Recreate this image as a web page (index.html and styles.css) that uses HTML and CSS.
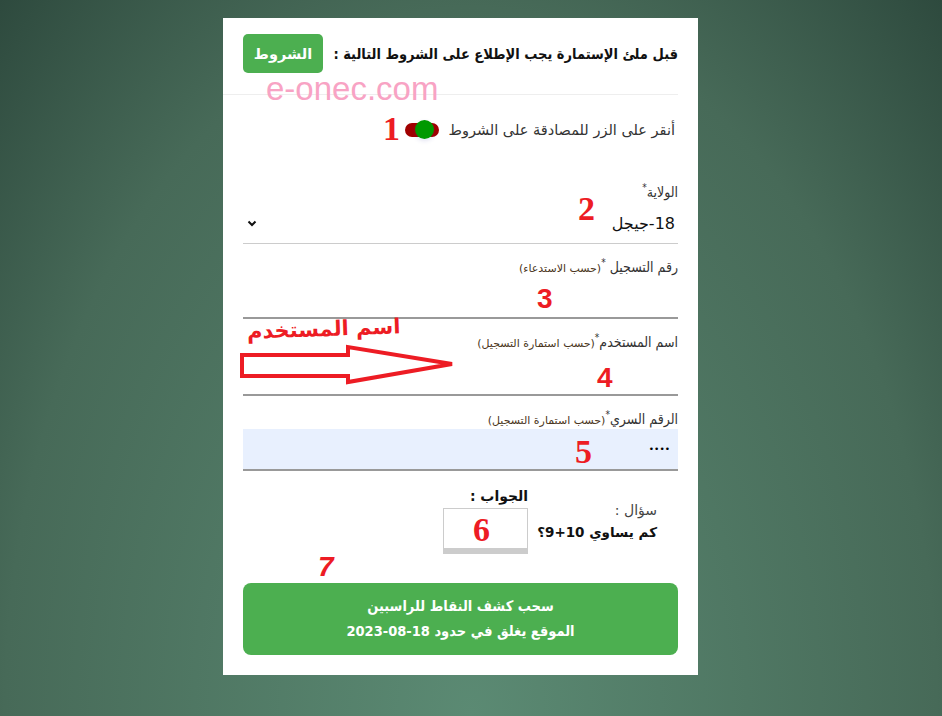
FILE: index.html
```html
<!DOCTYPE html>
<html lang="ar" dir="rtl">
<head>
    <meta charset="utf-8">
    <title>سحب كشف النقاط</title>
    <link rel="stylesheet" href="styles.css">
</head>
<body>
    <div class="card">
        <div class="terms-row">
            <span class="terms-text">قبل ملئ الإستمارة يجب الإطلاع على الشروط التالية :</span>
            <button class="btn-terms">الشروط</button>
        </div>
        <hr class="sep">

        <div class="agree-row">
            <span class="agree-text">أنقر على الزر للمصادقة على الشروط</span>
            <span class="switch"><span class="knob"></span></span>
        </div>

        <div class="field field-first">
            <label class="field-label">الولاية<sup>*</sup></label>
            <div class="select">
                <span>18-جيجل</span>
                <svg class="chevron" width="10" height="7" viewBox="0 0 10 7"><path d="M1.5 1.5 L5 5 L8.5 1.5" fill="none" stroke="#111" stroke-width="2"/></svg>
            </div>
        </div>

        <div class="field">
            <label class="field-label">رقم التسجيل <sup>*</sup><small>(حسب الاستدعاء)</small></label>
            <input class="text-input" type="text">
        </div>

        <div class="field">
            <label class="field-label">اسم المستخدم<sup>*</sup><small>(حسب استمارة التسجيل)</small></label>
            <input class="text-input tall" type="text">
        </div>

        <div class="field">
            <label class="field-label">الرقم السري<sup>*</sup><small>(حسب استمارة التسجيل)</small></label>
            <input class="text-input filled" type="password" value="1234">
        </div>

        <div class="captcha">
            <div class="question">
                <div class="q-title">سؤال :</div>
                <div class="q-text">كم يساوي 10+9؟</div>
            </div>
            <div class="answer">
                <div class="a-title">الجواب :</div>
                <input class="answer-box" type="text">
            </div>
        </div>

        <button class="btn-submit">سحب كشف النقاط للراسبين<br>الموقع يغلق في حدود 18-08-2023</button>

        <!-- annotations drawn over the screenshot -->
        <div class="watermark">e-onec.com</div>
        <span class="mark m1">1</span>
        <span class="mark m2">2</span>
        <span class="mark sans m3">3</span>
        <span class="mark sans m4">4</span>
        <span class="mark m5">5</span>
        <span class="mark m6">6</span>
        <span class="mark sans m7">7</span>
        <div class="hand-note">اسم المستخدم</div>
        <svg class="arrow" width="222" height="44" viewBox="0 0 222 44">
            <polygon points="2,12 108,12 108,4 212,21 108,39 108,33 2,33" fill="none" stroke="#ed1c24" stroke-width="4" stroke-linejoin="miter"/>
        </svg>
    </div>
</body>
</html>
```

FILE: styles.css
```css
body {
    margin: 0;
    min-height: 716px;
    background: radial-gradient(ellipse farthest-corner at 50% 100%, #5b8a73 0%, #476a58 70%, #2e4a3e 100%);
    font-family: "DejaVu Sans", "Liberation Sans", sans-serif;
    color: #222;
    overflow: hidden;
}

.card {
    position: relative;
    box-sizing: border-box;
    width: 475px;
    height: 657px;
    margin: 18px 244px 0 auto;
    padding: 16px 20px 0 20px;
    background-color: #fff;
}

.terms-row {
    display: flex;
    align-items: center;
    justify-content: space-between;
    height: 39px;
}

.terms-text {
    font-family: "DejaVu Sans Condensed", "DejaVu Sans", sans-serif;
    font-size: 14.5px;
    font-weight: bold;
    white-space: nowrap;
    color: #111;
}

.btn-terms {
    width: 80px;
    height: 39px;
    border: none;
    border-radius: 5px;
    background-color: #4caf50;
    color: #fff;
    font-family: inherit;
    font-size: 14.5px;
    font-weight: bold;
}

.sep {
    border: none;
    border-top: 1px solid #eee;
    margin: 21px 0 0 -20px;
}

.agree-row {
    display: flex;
    align-items: center;
    gap: 9px;
    height: 24px;
    margin-top: 23px;
    padding-right: 3px;
    font-size: 14.5px;
    color: #333;
}

.switch {
    position: relative;
    width: 34px;
    height: 14px;
    border-radius: 7px;
    background-color: #a00000;
}

.knob {
    position: absolute;
    top: -3px;
    right: 5px;
    width: 19px;
    height: 19px;
    border-radius: 50%;
    background-color: #009900;
    box-shadow: 0 2px 4px rgba(60, 60, 160, 0.15);
}

.field {
    margin-top: 13px;
}

.field-first {
    margin-top: 40px;
}

.field-label {
    display: block;
    height: 20px;
    line-height: 20px;
    font-family: "DejaVu Sans Condensed", "DejaVu Sans", sans-serif;
    font-size: 14px;
    color: #333;
}

.field-label sup {
    font-size: 10px;
    line-height: 0;
}

.field-label small {
    font-family: "DejaVu Sans", sans-serif;
    font-size: 11px;
    color: #4a3520;
}

.select {
    display: flex;
    align-items: center;
    justify-content: space-between;
    box-sizing: border-box;
    height: 42px;
    padding: 2px 3px 0 4px;
    border-bottom: 1px solid #ccc;
    font-size: 16px;
    color: #111;
}

.text-input {
    display: block;
    box-sizing: border-box;
    width: 100%;
    height: 42px;
    padding: 0 8px;
    border: none;
    border-bottom: 2px solid #999;
    outline: none;
    background: transparent;
    font-family: inherit;
    font-size: 14px;
}

.text-input.tall {
    height: 44px;
}

.text-input.filled {
    background-color: #e8f0fe;
    font-size: 9px;
}

.captcha {
    display: flex;
    align-items: center;
    gap: 9px;
    margin-top: 17px;
    padding-right: 21px;
}

.q-title {
    font-size: 14px;
    color: #444;
}

.q-text {
    margin-top: 6px;
    font-size: 13.5px;
    font-weight: bold;
    color: #111;
}

.a-title {
    font-size: 14px;
    font-weight: bold;
    color: #111;
    margin-bottom: 4px;
}

.answer-box {
    display: block;
    box-sizing: border-box;
    width: 85px;
    height: 46px;
    border: 1px solid #ccc;
    border-bottom: 6px solid #ccc;
    outline: none;
}

.btn-submit {
    display: block;
    width: 100%;
    height: 72px;
    margin-top: 29px;
    border: none;
    border-radius: 8px;
    background-color: #4caf50;
    color: #fff;
    font-family: "DejaVu Sans Condensed", "DejaVu Sans", sans-serif;
    font-size: 14.5px;
    font-weight: bold;
    line-height: 25px;
}

.watermark {
    position: absolute;
    left: 43px;
    top: 52px;
    font-family: "Liberation Sans", sans-serif;
    font-size: 33px;
    color: #f8a3c4;
    direction: ltr;
}

.mark {
    position: absolute;
    font-family: "Liberation Serif", serif;
    font-weight: bold;
    font-size: 34px;
    line-height: 1;
    color: #ed1c24;
}

.mark.sans {
    font-family: "Liberation Sans", sans-serif;
    font-size: 28px;
}

.m1 { left: 160px; top: 94px; }
.m2 { left: 355px; top: 174px; }
.m3 { left: 314px; top: 267px; }
.m4 { left: 374px; top: 346px; }
.m5 { left: 352px; top: 417px; }
.m6 { left: 250px; top: 495px; }
.m7 { left: 95px; top: 535px; font-style: italic; }

.hand-note {
    position: absolute;
    left: 24px;
    top: 299px;
    font-size: 21px;
    font-weight: bold;
    color: #ed1c24;
    transform: rotate(-2deg);
}

.arrow {
    position: absolute;
    left: 17px;
    top: 325px;
}
```
